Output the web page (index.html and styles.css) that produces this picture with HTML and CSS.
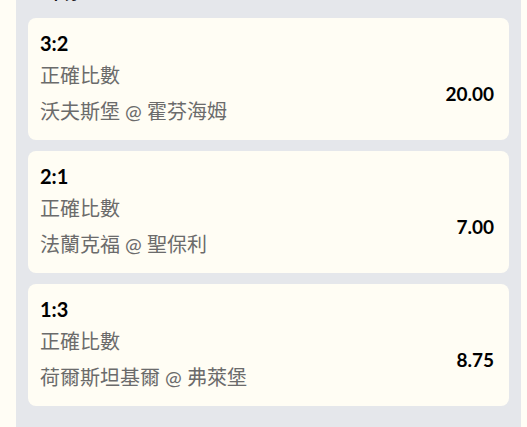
FILE: index.html
```html
<!DOCTYPE html>
<html lang="zh-Hant">
<head>
    <meta charset="UTF-8">
    <meta name="viewport" content="width=device-width, initial-scale=1.0">
    <title>投注單</title>
    <link rel="stylesheet" href="styles.css">
</head>
<body>
    <section class="panel">
        <h2 class="panel-title">早分</h2>
        <div class="bet">
            <div class="bet-score">3:2</div>
            <div class="bet-row">
                <div class="bet-info">
                    <div class="bet-market">正確比數</div>
                    <div class="bet-match">沃夫斯堡 @ 霍芬海姆</div>
                </div>
                <div class="bet-odds">20.00</div>
            </div>
        </div>
        <div class="bet">
            <div class="bet-score">2:1</div>
            <div class="bet-row">
                <div class="bet-info">
                    <div class="bet-market">正確比數</div>
                    <div class="bet-match">法蘭克福 @ 聖保利</div>
                </div>
                <div class="bet-odds">7.00</div>
            </div>
        </div>
        <div class="bet">
            <div class="bet-score">1:3</div>
            <div class="bet-row">
                <div class="bet-info">
                    <div class="bet-market">正確比數</div>
                    <div class="bet-match">荷爾斯坦基爾 @ 弗萊堡</div>
                </div>
                <div class="bet-odds">8.75</div>
            </div>
        </div>
    </section>
</body>
</html>
```

FILE: styles.css
```css
body {
    font-family: Lato, "Noto Sans CJK TC", sans-serif;
    margin: 0;
    padding: 0;
    background-color: #fffdf5;
    color: #000;
}
.panel {
    width: 505px;
    box-sizing: border-box;
    margin: -22px 0 0 16px;
    padding: 0 12px 40px;
    background-color: #e5e7eb;
    display: flex;
    flex-direction: column;
    gap: 11px;
}
.panel-title {
    margin: 0;
    padding-left: 20px;
    font-size: 16px;
    font-weight: bold;
    line-height: 29px;
    color: #111;
}
.bet {
    background-color: #fffdf4;
    border-radius: 8px;
    padding: 11px 15px 12px 12px;
    height: 122px;
    box-sizing: border-box;
}
.bet-score {
    font-size: 20px;
    font-weight: bold;
    line-height: 28px;
}
.bet-row {
    display: flex;
    align-items: center;
    justify-content: space-between;
}
.bet-market,
.bet-match {
    font-size: 20px;
    line-height: 36px;
    color: #6b6b6b;
}
.bet-odds {
    font-size: 19px;
    font-weight: bold;
}
```
